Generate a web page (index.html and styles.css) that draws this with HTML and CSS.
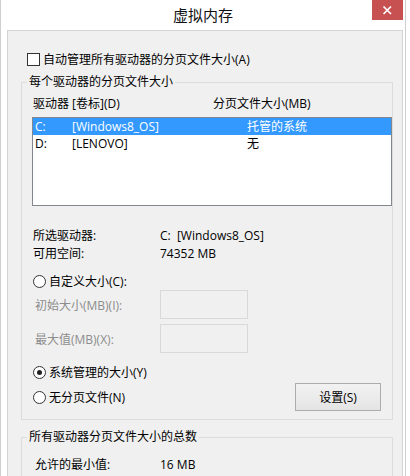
FILE: index.html
```html
<!DOCTYPE html>
<html lang="zh-CN">
<head>
    <meta charset="UTF-8">
    <meta name="viewport" content="width=device-width, initial-scale=1.0">
    <title>虚拟内存</title>
    <link rel="stylesheet" href="styles.css">
</head>
<body>
    <div class="window">
        <!-- Title Bar -->
        <div class="titlebar">
            <span class="title">虚拟内存</span>
            <div class="close-btn">
                <svg width="31" height="20" viewBox="0 0 31 20">
                    <path d="M11.5 6.5 L19 14 M19 6.5 L11.5 14" stroke="#fff" stroke-width="1.7" fill="none"/>
                </svg>
            </div>
        </div>

        <div class="client">
            <label class="check-row">
                <span class="checkbox"></span>
                <span>自动管理所有驱动器的分页文件大小(A)</span>
            </label>

            <!-- Per drive -->
            <fieldset class="group group-drives">
                <legend>每个驱动器的分页文件大小</legend>
                <div class="list-header">
                    <span>驱动器 [卷标](D)</span>
                    <span>分页文件大小(MB)</span>
                </div>
                <div class="drive-list">
                    <div class="drive-row selected">
                        <span>C:</span>
                        <span>[Windows8_OS]</span>
                        <span>托管的系统</span>
                    </div>
                    <div class="drive-row">
                        <span>D:</span>
                        <span>[LENOVO]</span>
                        <span>无</span>
                    </div>
                </div>

                <div class="info-row info-first">
                    <span>所选驱动器:</span>
                    <span>C:&nbsp;&nbsp;[Windows8_OS]</span>
                </div>
                <div class="info-row">
                    <span>可用空间:</span>
                    <span>74352 MB</span>
                </div>

                <label class="radio-row radio-custom">
                    <span class="radio"></span>
                    <span>自定义大小(C):</span>
                </label>
                <div class="size-row">
                    <span>初始大小(MB)(I):</span>
                    <span class="textbox"></span>
                </div>
                <div class="size-row size-max">
                    <span>最大值(MB)(X):</span>
                    <span class="textbox"></span>
                </div>

                <label class="radio-row radio-system">
                    <span class="radio checked"></span>
                    <span>系统管理的大小(Y)</span>
                </label>
                <div class="last-row">
                    <label class="radio-row">
                        <span class="radio"></span>
                        <span>无分页文件(N)</span>
                    </label>
                    <button class="btn" type="button">设置(S)</button>
                </div>
            </fieldset>

            <!-- Totals -->
            <fieldset class="group group-total">
                <legend>所有驱动器分页文件大小的总数</legend>
                <div class="total-row">
                    <span>允许的最小值:</span>
                    <span>16 MB</span>
                </div>
            </fieldset>
        </div>
    </div>
</body>
</html>
```

FILE: styles.css
```css
body {
    margin: 0;
    background: #fff;
    font-family: "Open Sans", "Noto Sans CJK SC", sans-serif;
    font-size: 12px;
    color: #000;
    overflow: hidden;
}

.window {
    width: 404px;
    height: 476px;
    border-left: 1px solid #cfcfcf;
    border-right: 1px solid #cfcfcf;
    display: flex;
    flex-direction: column;
    overflow: hidden;
}

/* Title Bar */
.titlebar {
    position: relative;
    height: 30px;
    flex-shrink: 0;
    display: flex;
    justify-content: center;
    align-items: center;
}

.title {
    font-family: "Noto Sans CJK SC", sans-serif;
    font-size: 15px;
    line-height: 30px;
    color: #111;
}

.close-btn {
    position: absolute;
    top: 0;
    right: 2px;
    width: 31px;
    height: 20px;
    background: #c75050;
}

.close-btn svg {
    display: block;
}

/* Client area */
.client {
    flex: 1;
    margin: 0 2px 0 6px;
    background: #f0f0f0;
    border: 1px solid #d4d4d4;
    border-bottom: none;
    display: flex;
    flex-direction: column;
}

.check-row {
    display: flex;
    align-items: center;
    gap: 3px;
    height: 18px;
    margin: 19px 0 0 19px;
}

.checkbox {
    width: 11px;
    height: 11px;
    border: 1px solid #333;
    background: #fff;
}

/* Group boxes */
.group {
    margin: 0 0 0 13px;
    padding: 0 0 0 5px;
    width: 365px;
    min-inline-size: 0;
    border: 1px solid #dcdcdc;
    display: flex;
    flex-direction: column;
}

.group legend {
    padding: 0 2px;
    line-height: 16px;
}

.group-drives {
    margin-top: 6px;
    padding-bottom: 8px;
}

.group-total {
    margin-top: 9px;
    padding-bottom: 20px;
}

.list-header {
    display: grid;
    grid-template-columns: 180px 1fr;
    line-height: 16px;
    margin: 6px 0 0 6px;
}

.drive-list {
    margin: 5px 0 0 5px;
    height: 87px;
    background: #fff;
    border: 1px solid #828790;
}

.drive-row {
    display: grid;
    grid-template-columns: 37px 175px 1fr;
    height: 17px;
    line-height: 17px;
    padding-left: 2px;
}

.drive-row.selected {
    background: #3399ff;
    color: #fff;
}

.info-row {
    display: grid;
    grid-template-columns: 127px 1fr;
    height: 18px;
    line-height: 18px;
    margin-left: 6px;
}

.info-first {
    margin-top: 21px;
}

/* Radios */
.radio-row {
    display: flex;
    align-items: center;
    gap: 3px;
    height: 18px;
    margin-left: 6px;
}

.radio {
    width: 11px;
    height: 11px;
    border: 1px solid #333;
    border-radius: 50%;
    background: #fff;
    display: flex;
    align-items: center;
    justify-content: center;
}

.radio.checked::after {
    content: "";
    width: 5px;
    height: 5px;
    border-radius: 50%;
    background: #222;
}

.radio-custom {
    margin-top: 9px;
}

.radio-system {
    margin-top: 10px;
}

.size-row {
    display: grid;
    grid-template-columns: 125px 88px;
    align-items: center;
    margin-left: 8px;
    color: #8d8d8d;
}

.size-max {
    margin-top: 5px;
}

.textbox {
    height: 27px;
    border: 1px solid #d9d9d9;
    background: #f0f0f0;
}

.last-row {
    display: flex;
    align-items: center;
    justify-content: space-between;
    margin-top: 2px;
    padding-right: 11px;
}

.last-row .radio-row {
    margin-left: 6px;
}

.btn {
    width: 86px;
    height: 28px;
    border: 1px solid #acacac;
    background: linear-gradient(#f2f2f2, #e4e4e4);
    font-family: inherit;
    font-size: 12px;
    color: #000;
    padding: 0;
}

.total-row {
    display: grid;
    grid-template-columns: 125px 1fr;
    height: 18px;
    line-height: 18px;
    margin: 11px 0 0 8px;
}
```
